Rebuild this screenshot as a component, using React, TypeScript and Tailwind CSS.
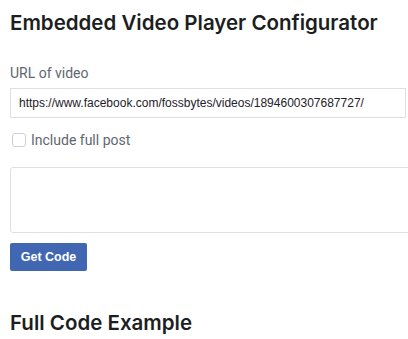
import React from 'react';

const App: React.FC = () => {
  return (
    <div className="w-[408px] h-[339px] overflow-hidden bg-white px-[10px]">
      {/* Configurator */}
      <h1 className="pt-[11px] text-[20.5px] leading-[24px] font-semibold text-[#1c1e21] font-['Inter',sans-serif] whitespace-nowrap">
        Embedded Video Player Configurator
      </h1>

      <label className="mt-[30px] block text-[14px] leading-[16px] text-[#606770] font-['Roboto',sans-serif]">
        URL of video
      </label>
      <input
        type="text"
        readOnly
        value="https://www.facebook.com/fossbytes/videos/1894600307687727/"
        className="mt-[7px] block w-[396px] h-[30px] border border-[#dddfe2] px-[8px] text-[12px] text-[#1d2129] font-['Liberation_Sans',Arial,sans-serif] outline-none"
      />

      <div className="mt-[14px] flex items-center h-[16px]">
        <span className="ml-[2px] w-[14px] h-[14px] rounded-[3px] border border-[#ccd0d5] bg-white" />
        <span className="ml-[5px] text-[14px] leading-[16px] text-[#606770] font-['Roboto',sans-serif]">
          Include full post
        </span>
      </div>

      <textarea
        readOnly
        className="mt-[19px] block w-[420px] h-[66px] rounded-[3px] border border-[#dddfe2] resize-none outline-none"
      />

      <button className="mt-[10px] block w-[77px] h-[28px] rounded-[2px] bg-[#4267b2] text-white text-[12.5px] font-bold font-['Liberation_Sans',Arial,sans-serif]">
        Get Code
      </button>

      {/* Code example */}
      <h2 className="mt-[40px] text-[20.5px] leading-[24px] font-semibold text-[#1c1e21] font-['Inter',sans-serif]">
        Full Code Example
      </h2>
    </div>
  );
};

export default App;
